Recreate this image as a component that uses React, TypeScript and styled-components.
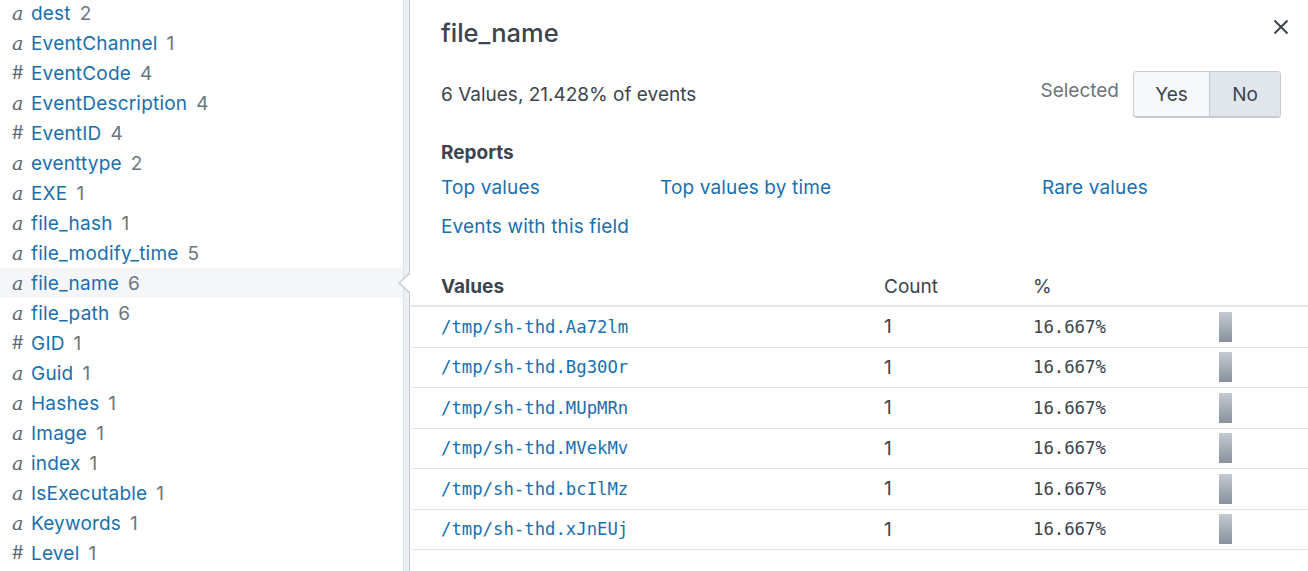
import React from "react";
import styled, { createGlobalStyle } from "styled-components";

const Global = createGlobalStyle`
  html, body { margin: 0; padding: 0; background: #fff; }
  body { font-family: Inter, "Open Sans", sans-serif; overflow: hidden; }
  * { box-sizing: border-box; }
`;

const Page = styled.div`
  display: flex;
  width: 1308px;
  height: 571px;
  overflow: hidden;
`;

const FieldList = styled.ul`
  list-style: none;
  margin: -2px 0 0 0;
  padding: 0;
  width: 403px;
  flex: none;
`;

const FieldRow = styled.li<{ $active?: boolean }>`
  display: flex;
  align-items: center;
  height: 30px;
  padding-left: 12px;
  font-size: 19px;
  letter-spacing: 0.2px;
  background: ${(p) => (p.$active ? "#f5f6f8" : "transparent")};
`;

const TypeIcon = styled.span<{ $num?: boolean }>`
  width: 19px;
  flex: none;
  color: #5c6773;
  font-family: ${(p) => (p.$num ? "Inter, sans-serif" : "'DejaVu Serif', 'Liberation Serif', serif")};
  font-style: ${(p) => (p.$num ? "normal" : "italic")};
  font-size: ${(p) => (p.$num ? "18px" : "19px")};
  line-height: 1;
`;

const FieldName = styled.span`
  color: #1a6fad;
`;

const FieldCount = styled.span`
  color: #6b7580;
  margin-left: 9px;
`;

const ScrollTrack = styled.div`
  width: 7px;
  flex: none;
  background: #edf0f3;
  border-left: 1px solid #dde2e7;
  border-right: 1px solid #c3cbd4;
`;

const Popover = styled.section`
  position: relative;
  flex: 1;
  padding-left: 1px;
  background: #fff;
`;

const Arrow = styled.div`
  position: absolute;
  left: -12px;
  top: 272px;
  width: 0;
  height: 0;
  border-top: 11px solid transparent;
  border-bottom: 11px solid transparent;
  border-right: 12px solid #c3cbd4;
  &::after {
    content: "";
    position: absolute;
    left: 2px;
    top: -10px;
    border-top: 10px solid transparent;
    border-bottom: 10px solid transparent;
    border-right: 11px solid #fff;
  }
`;

const Inner = styled.div`
  padding: 0 20px 0 30px;
`;

const Header = styled.div`
  display: flex;
  justify-content: space-between;
  align-items: center;
  padding-top: 18px;
  height: 48px;
`;

const Title = styled.h1`
  margin: 0;
  font-size: 25.5px;
  font-weight: 500;
  line-height: 30px;
  color: #3c444d;
`;

const CloseButton = styled.button`
  border: 0;
  background: none;
  padding: 0;
  margin-top: -12px;
  margin-right: -3px;
  width: 20px;
  height: 20px;
  display: flex;
  align-items: center;
  justify-content: center;
  color: #3c444d;
`;

const Summary = styled.div`
  display: flex;
  align-items: center;
  justify-content: space-between;
  margin-top: 23px;
  height: 47px;
`;

const SummaryText = styled.span`
  font-size: 19px;
  color: #3c444d;
`;

const SelectedGroup = styled.div`
  display: flex;
  align-items: center;
  gap: 14px;
  margin-right: 7px;
`;

const SelectedLabel = styled.span`
  font-size: 19px;
  color: #6b7580;
  padding-bottom: 8px;
`;

const Segmented = styled.div`
  display: flex;
  height: 47px;
  border: 1px solid #c3cbd4;
  border-bottom-width: 2px;
  border-radius: 4px;
  overflow: hidden;
`;

const Segment = styled.button<{ $on?: boolean }>`
  border: 0;
  margin: 0;
  font-family: inherit;
  font-size: 19px;
  color: #3c444d;
  background: ${(p) => (p.$on ? "#e1e6eb" : "#f7f8fa")};
  width: ${(p) => (p.$on ? "71px" : "75px")};
  border-left: ${(p) => (p.$on ? "1px solid #c3cbd4" : "0")};
  padding: 0;
`;

const SectionTitle = styled.h2`
  margin: 23px 0 0 0;
  font-size: 19px;
  font-weight: 700;
  line-height: 24px;
  color: #3c444d;
`;

const Links = styled.div`
  display: grid;
  grid-template-columns: 219px 382px auto;
  row-gap: 15px;
  margin-top: 11px;
`;

const Link = styled.a`
  font-size: 19px;
  letter-spacing: 0.15px;
  line-height: 24px;
  color: #1a6fad;
  text-decoration: none;
  cursor: pointer;
`;

const Table = styled.div`
  margin-top: 28px;
`;

const Grid = styled.div<{ $head?: boolean }>`
  display: grid;
  grid-template-columns: 473px 149px 186px 1fr;
  align-items: center;
  height: ${(p) => (p.$head ? "40px" : "40.5px")};
  border-bottom: ${(p) => (p.$head ? "2px" : "1px")} solid #e1e6eb;
`;

const HeadCell = styled.div<{ $bold?: boolean; $first?: boolean }>`
  font-size: 19px;
  font-weight: ${(p) => (p.$bold ? 700 : 400)};
  color: #3c444d;
  padding-left: ${(p) => (p.$first ? "30px" : "0")};
`;

const ValueCell = styled.div`
  font-family: "DejaVu Sans Mono", "Liberation Mono", monospace;
  font-size: 17.3px;
  color: #1a6fad;
  padding-left: 30px;
`;

const CountCell = styled.div`
  font-size: 19px;
  color: #3c444d;
`;

const PercentCell = styled.div`
  font-family: "DejaVu Sans Mono", "Liberation Mono", monospace;
  font-size: 17.3px;
  color: #3c444d;
`;

const BarCell = styled.div`
  display: flex;
  align-items: center;
`;

const Bar = styled.div`
  width: 13px;
  height: 30px;
  background: linear-gradient(#c3cad3, #87919c);
`;

type Field = { t: "a" | "#"; name: string; count: number };

const fields: Field[] = [
  { t: "a", name: "dest", count: 2 },
  { t: "a", name: "EventChannel", count: 1 },
  { t: "#", name: "EventCode", count: 4 },
  { t: "a", name: "EventDescription", count: 4 },
  { t: "#", name: "EventID", count: 4 },
  { t: "a", name: "eventtype", count: 2 },
  { t: "a", name: "EXE", count: 1 },
  { t: "a", name: "file_hash", count: 1 },
  { t: "a", name: "file_modify_time", count: 5 },
  { t: "a", name: "file_name", count: 6 },
  { t: "a", name: "file_path", count: 6 },
  { t: "#", name: "GID", count: 1 },
  { t: "a", name: "Guid", count: 1 },
  { t: "a", name: "Hashes", count: 1 },
  { t: "a", name: "Image", count: 1 },
  { t: "a", name: "index", count: 1 },
  { t: "a", name: "IsExecutable", count: 1 },
  { t: "a", name: "Keywords", count: 1 },
  { t: "#", name: "Level", count: 1 },
];

const values = [
  "/tmp/sh-thd.Aa72lm",
  "/tmp/sh-thd.Bg30Or",
  "/tmp/sh-thd.MUpMRn",
  "/tmp/sh-thd.MVekMv",
  "/tmp/sh-thd.bcIlMz",
  "/tmp/sh-thd.xJnEUj",
];

export default function App() {
  return (
    <>
      <Global />
      <Page>
        <FieldList>
          {fields.map((f) => (
            <FieldRow key={f.name} $active={f.name === "file_name"}>
              <TypeIcon $num={f.t === "#"}>{f.t}</TypeIcon>
              <FieldName>{f.name}</FieldName>
              <FieldCount>{f.count}</FieldCount>
            </FieldRow>
          ))}
        </FieldList>
        <ScrollTrack />
        <Popover>
          <Arrow />
          <Inner>
            <Header>
              <Title>file_name</Title>
              <CloseButton aria-label="Close">
                <svg width="16" height="16" viewBox="0 0 16 16">
                  <path d="M1.5 1.5 L14.5 14.5 M14.5 1.5 L1.5 14.5" stroke="#3c444d" strokeWidth="2" fill="none" />
                </svg>
              </CloseButton>
            </Header>
            <Summary>
              <SummaryText>6 Values, 21.428% of events</SummaryText>
              <SelectedGroup>
                <SelectedLabel>Selected</SelectedLabel>
                <Segmented>
                  <Segment>Yes</Segment>
                  <Segment $on>No</Segment>
                </Segmented>
              </SelectedGroup>
            </Summary>
            <SectionTitle>Reports</SectionTitle>
            <Links>
              <Link>Top values</Link>
              <Link>Top values by time</Link>
              <Link>Rare values</Link>
              <Link>Events with this field</Link>
            </Links>
          </Inner>
          <Table>
            <Grid $head>
              <HeadCell $bold $first>Values</HeadCell>
              <HeadCell>Count</HeadCell>
              <HeadCell>%</HeadCell>
              <div />
            </Grid>
            {values.map((v) => (
              <Grid key={v}>
                <ValueCell>{v}</ValueCell>
                <CountCell>1</CountCell>
                <PercentCell>16.667%</PercentCell>
                <BarCell>
                  <Bar />
                </BarCell>
              </Grid>
            ))}
          </Table>
        </Popover>
      </Page>
    </>
  );
}
